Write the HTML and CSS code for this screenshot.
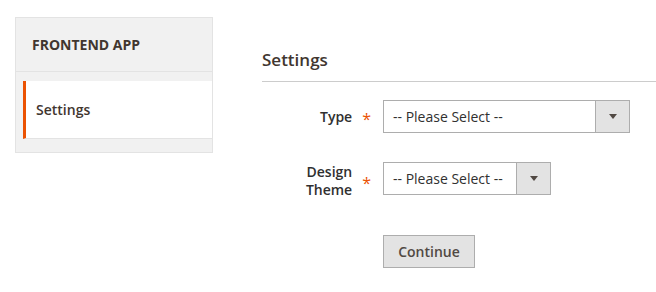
FILE: index.html
```html
<!DOCTYPE html>
<html lang="en">
<head>
  <meta charset="UTF-8">
  <title>Frontend App - Settings</title>
  <link rel="stylesheet" href="styles.css">
</head>
<body>

<div class="page">
  <div class="sidebar">
    <div class="sidebar-title">FRONTEND APP</div>
    <ul class="sidebar-nav">
      <li class="active">Settings</li>
    </ul>
  </div>

  <div class="main">
    <h2 class="section-title">Settings</h2>

    <div class="form">
      <div class="field">
        <div class="field-label"><span>Type</span><span class="req">*</span></div>
        <div class="select select-wide">
          <span class="select-value">-- Please Select --</span>
          <span class="select-arrow"></span>
        </div>
      </div>

      <div class="field field-theme">
        <div class="field-label"><span>Design<br>Theme</span><span class="req">*</span></div>
        <div class="select select-narrow">
          <span class="select-value">-- Please Select --</span>
          <span class="select-arrow"></span>
        </div>
      </div>

      <div class="actions">
        <button class="btn">Continue</button>
      </div>
    </div>
  </div>
</div>

</body>
</html>
```

FILE: styles.css
```css
* { margin: 0; padding: 0; box-sizing: border-box; }

body {
  font-family: 'Open Sans', 'Liberation Sans', sans-serif;
  font-size: 14px;
  color: #303030;
  background: #fff;
}

.page {
  display: flex;
  align-items: flex-start;
  padding: 17px 0 0 15px;
}

/* Sidebar */
.sidebar {
  width: 198px;
  background: #f1f1f1;
  border: 1px solid #e3e3e3;
}

.sidebar-title {
  padding: 18px 16px;
  line-height: 17px;
  font-weight: 700;
  color: #41362f;
  border-bottom: 1px solid #e3e3e3;
}

.sidebar-nav {
  list-style: none;
  padding: 9px 0 13px 7px;
}

.sidebar-nav li {
  background: #fff;
  border-left: 3px solid #eb5202;
  border-bottom: 1px solid #e3e3e3;
  padding: 20px 10px 19px;
  line-height: 18px;
  font-weight: 600;
  color: #41362f;
}

/* Main */
.main {
  flex: 1;
  margin-left: 49px;
}

.section-title {
  font-size: 17px;
  font-weight: 600;
  color: #41362f;
  line-height: 20px;
  padding: 33px 0 11px;
  border-bottom: 1px solid #cccccc;
}

.form {
  padding-top: 18px;
}

.field {
  display: flex;
  align-items: center;
}

.field-theme {
  align-items: flex-start;
  margin-top: 29px;
}

.field-label {
  width: 121px;
  display: flex;
  justify-content: flex-end;
  align-items: center;
  padding-right: 12px;
  text-align: right;
  font-weight: 600;
  line-height: 18px;
}

.field-theme .field-label {
  margin-top: 1px;
}

.req {
  color: #eb5202;
  margin-left: 10px;
  font-weight: 400;
  font-size: 16px;
  padding-top: 4px;
}

.select {
  display: flex;
  height: 33px;
  border: 1px solid #adadad;
  background: #fff;
}

.select-wide { width: 247px; }
.select-narrow { width: 168px; }

.select-value {
  flex: 1;
  padding: 0 9px;
  line-height: 31px;
  color: #303030;
}

.select-arrow {
  width: 34px;
  background: #e3e3e3;
  border-left: 1px solid #adadad;
  display: flex;
  align-items: center;
  justify-content: center;
}

.select-arrow::before {
  content: "";
  border-left: 4px solid transparent;
  border-right: 4px solid transparent;
  border-top: 5px solid #514943;
}

.actions {
  padding: 36px 0 0 121px;
}

.btn {
  font-family: inherit;
  font-size: 14px;
  font-weight: 600;
  color: #514943;
  background: #e3e3e3;
  border: 1px solid #adadad;
  height: 33px;
  width: 92px;
  cursor: pointer;
}
```
